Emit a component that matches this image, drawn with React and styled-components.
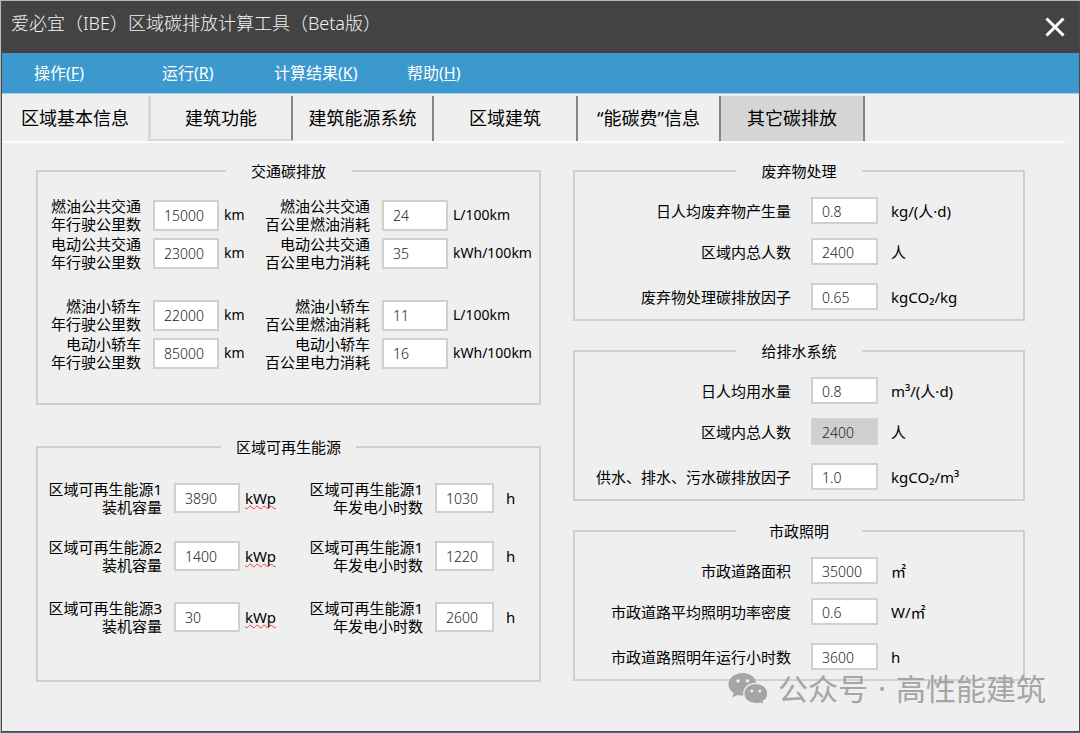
import React, { useState } from "react";
import styled, { createGlobalStyle } from "styled-components";

const GlobalStyle = createGlobalStyle`
  *, *::before, *::after { box-sizing: border-box; }
  body {
    margin: 0;
    background: #efefef;
    color: #000;
    font-family: "Noto Sans", "Noto Sans CJK SC", sans-serif;
    font-size: 15px;
  }
  button, input { font: inherit; color: inherit; }
`;

const Window = styled.div`
  position: relative;
  display: flex;
  min-height: 100vh;
  border-top: 1px solid #b4b8b8;
  border-left: 1px solid #b4b8b8;
  border-bottom: 1px solid #3a6ea5;
`;

const Frame = styled.div`
  flex: 1;
  display: flex;
  flex-direction: column;
  background: #efefef;
  border: 1px solid #4a4a4a;
  border-top: 0;
`;

const TitleBar = styled.header`
  display: flex;
  align-items: center;
  justify-content: space-between;
  height: 52px;
  padding: 0 14px 0 9px;
  background: #434343;
  color: #f2f2f2;
`;

const Title = styled.h1`
  margin: 0;
  padding-bottom: 8px;
  font-size: 18px;
  line-height: 24px;
  font-weight: 300;
`;

const CloseButton = styled.button`
  display: flex;
  padding: 0;
  border: 0;
  background: none;
  cursor: pointer;
`;

const MenuBar = styled.nav`
  display: flex;
  height: 41px;
  padding-left: 32px;
  background: #3c99cd;
  border-bottom: 1px solid #9fd0ea;
`;

const MenuItem = styled.button`
  width: ${(p) => p.$width}px;
  padding: 0 0 2px;
  border: 0;
  background: none;
  color: #fff;
  font-size: 16px;
  font-weight: 400;
  text-align: left;
  cursor: pointer;
`;

const TabList = styled.div`
  display: flex;
  height: 49px;
  margin-right: 14px;
  padding-top: 2px;
  border-bottom: 2px solid #fbfbfb;
`;

const Tab = styled.button`
  flex: 0 1 ${(p) => p.$width}px;
  padding: 0 0 ${(p) => (p.$raised ? 2 : 4)}px;
  border: 0;
  border-right: ${(p) => (p.$soft ? "3px solid #d8d8d8" : "2px solid #858585")};
  border-bottom: ${(p) => (p.$raised ? "2px solid #d8d8d8" : "0")};
  background: ${(p) => (p.$active ? "#d6d6d6" : "transparent")};
  color: #000;
  font-size: 18px;
  white-space: nowrap;
  cursor: pointer;
`;

const Content = styled.main`
  display: grid;
  grid-template-columns: 505fr 452fr;
  column-gap: 32px;
  padding: 17px 54px 20px 34px;
`;

const Column = styled.div`
  display: flex;
  flex-direction: column;
  gap: ${(p) => p.$gap}px;
  min-width: 0;
`;

const Panel = styled.fieldset`
  min-width: 0;
  margin: 0;
  padding: ${(p) => p.$padding};
  border: 2px solid #cfcfcf;
`;

const Legend = styled.legend`
  min-width: 126px;
  margin: 0 auto;
  padding: 0 15px;
  line-height: 22px;
  text-align: center;
`;

const Rows = styled.div`
  display: grid;
  grid-template-rows: ${(p) => p.$tracks};
  align-items: start;
`;

const Row = styled.div`
  display: grid;
  grid-template-columns: ${(p) => p.$columns};
  align-items: center;
  height: ${(p) => p.$height}px;
`;

const Label = styled.label`
  padding-right: ${(p) => p.$space || 12}px;
  line-height: 18px;
  text-align: right;
  white-space: nowrap;
`;

const Value = styled.input`
  width: 100%;
  height: ${(p) => p.$height}px;
  padding: 1px 0 0 9px;
  border: 2px solid #d0d0d0;
  border-radius: 0;
  outline: none;
  background: #fff;
  color: #222;
  font-size: 14px;
  font-weight: 300;

  &:disabled {
    background: #d0cece;
  }
`;

const Unit = styled.span`
  padding-left: ${(p) => p.$space}px;
  font-size: ${(p) => p.$size}px;
  line-height: 18px;
  white-space: nowrap;
`;

const Misspelt = styled.span`
  text-decoration: underline wavy #f04040 1px;
  text-underline-offset: 1px;
  text-decoration-skip-ink: none;
`;

const Watermark = styled.div`
  position: absolute;
  right: 34px;
  bottom: 26px;
  display: flex;
  align-items: center;
  gap: 10px;
  color: #a5a5a5;
  font-size: 30px;
  line-height: 32px;
  pointer-events: none;
`;

const menus = [
  { text: "操作", key: "F", width: 128 },
  { text: "运行", key: "R", width: 112 },
  { text: "计算结果", key: "K", width: 133 },
  { text: "帮助", key: "H", width: 90 },
];

const tabs = [
  { text: "区域基本信息", width: 149, soft: true },
  { text: "建筑功能", width: 142, raised: true },
  { text: "建筑能源系统", width: 141 },
  { text: "区域建筑", width: 144 },
  { text: "“能碳费”信息", width: 143 },
  { text: "其它碳排放", width: 144 },
];

const transport = [
  [["燃油公共交通", "年行驶公里数"], "15000", "km", ["燃油公共交通", "百公里燃油消耗"], "24", "L/100km"],
  [["电动公共交通", "年行驶公里数"], "23000", "km", ["电动公共交通", "百公里电力消耗"], "35", "kWh/100km"],
  [["燃油小轿车", "年行驶公里数"], "22000", "km", ["燃油小轿车", "百公里燃油消耗"], "11", "L/100km"],
  [["电动小轿车", "年行驶公里数"], "85000", "km", ["电动小轿车", "百公里电力消耗"], "16", "kWh/100km"],
];

const renewable = [
  [["区域可再生能源1", "装机容量"], "3890", "kWp", ["区域可再生能源1", "年发电小时数"], "1030", "h"],
  [["区域可再生能源2", "装机容量"], "1400", "kWp", ["区域可再生能源1", "年发电小时数"], "1220", "h"],
  [["区域可再生能源3", "装机容量"], "30", "kWp", ["区域可再生能源1", "年发电小时数"], "2600", "h"],
];

const singlePanels = [
  {
    id: "waste",
    title: "废弃物处理",
    rows: [
      ["日人均废弃物产生量", "0.8", "kg/(人·d)"],
      ["区域内总人数", "2400", "人"],
      ["废弃物处理碳排放因子", "0.65", "kgCO₂/kg"],
    ],
  },
  {
    id: "water",
    title: "给排水系统",
    rows: [
      ["日人均用水量", "0.8", "m³/(人·d)"],
      ["区域内总人数", "2400", "人", true],
      ["供水、排水、污水碳排放因子", "1.0", "kgCO₂/m³"],
    ],
  },
  {
    id: "lighting",
    title: "市政照明",
    rows: [
      ["市政道路面积", "35000", "㎡"],
      ["市政道路平均照明功率密度", "0.6", "W/㎡"],
      ["市政道路照明年运行小时数", "3600", "h"],
    ],
  },
];

function Field({ id, label, value, unit, height, labelSpace, unitSpace, unitSize = 15, disabled }) {
  const lines = Array.isArray(label) ? label : [label];
  return (
    <>
      <Label htmlFor={id} $space={labelSpace}>
        {lines.map((line, i) => (
          <React.Fragment key={line}>
            {i > 0 && <br />}
            {line}
          </React.Fragment>
        ))}
      </Label>
      <Value id={id} defaultValue={value} disabled={disabled} $height={height} />
      <Unit $space={unitSpace} $size={unitSize}>
        {unit === "kWp" ? <Misspelt>{unit}</Misspelt> : unit}
      </Unit>
    </>
  );
}

function PairPanel({ id, title, rows, columns, tracks, padding, inputHeight, unitSize, secondUnitSpace }) {
  const shared = { height: inputHeight, unitSize };
  return (
    <Panel $padding={padding}>
      <Legend>{title}</Legend>
      <Rows $tracks={tracks}>
        {rows.map(([labelA, valueA, unitA, labelB, valueB, unitB], i) => (
          <Row key={i} $columns={columns} $height={36}>
            <Field id={`${id}-${i}-a`} label={labelA} value={valueA} unit={unitA} unitSpace={5} {...shared} />
            <Field id={`${id}-${i}-b`} label={labelB} value={valueB} unit={unitB} unitSpace={secondUnitSpace} {...shared} />
          </Row>
        ))}
      </Rows>
    </Panel>
  );
}

function WeChatIcon() {
  return (
    <svg width="40" height="34" viewBox="0 0 40 34" aria-hidden="true">
      <path
        fill="#a5a5a5"
        d="M14.5 1C6.6 1 .5 6 .5 12.400c0 3.600 2 6.700 5.200 8.800L4.300 25.600l5.100-2.700c1.600.5 3.300.7 5.100.7 7.900 0 14-5 14-11.200S22.400 1 14.500 1z"
      />
      <circle cx="10" cy="9" r="1.800" fill="#efefef" />
      <circle cx="19.500" cy="9" r="1.800" fill="#efefef" />
      <path
        fill="#a5a5a5"
        stroke="#efefef"
        strokeWidth="1.300"
        d="M27.800 11.300c-6.700 0-12 4.400-12 10.100s5.300 10.200 12 10.200c1.500 0 2.900-.2 4.200-.6l4.400 2.300-1.200-3.900c2.800-1.800 4.600-4.700 4.600-8 0-5.700-5.300-10.100-12-10.100z"
      />
      <circle cx="23.800" cy="19" r="1.500" fill="#efefef" />
      <circle cx="31.800" cy="19" r="1.500" fill="#efefef" />
    </svg>
  );
}

export default function App() {
  const [active, setActive] = useState(5);
  return (
    <>
      <GlobalStyle />
      <Window>
        <Frame>
          <TitleBar>
            <Title>爱必宜（IBE）区域碳排放计算工具（Beta版）</Title>
            <CloseButton aria-label="关闭">
              <svg width="20" height="20" viewBox="0 0 20 20">
                <path d="M1.500 1.500L18.500 18.500M18.500 1.500L1.500 18.500" stroke="#fff" strokeWidth="3" />
              </svg>
            </CloseButton>
          </TitleBar>
          <MenuBar>
            {menus.map((m) => (
              <MenuItem key={m.key} $width={m.width}>
                {m.text}(<u>{m.key}</u>)
              </MenuItem>
            ))}
          </MenuBar>
          <TabList role="tablist">
            {tabs.map((t, i) => (
              <Tab
                key={t.text}
                role="tab"
                aria-selected={i === active}
                $active={i === active}
                $soft={t.soft}
                $raised={t.raised}
                $width={t.width}
                onClick={() => setActive(i)}
              >
                {t.text}
              </Tab>
            ))}
          </TabList>
          <Content>
            <Column $gap={31}>
              <PairPanel
                id="transport"
                title="交通碳排放"
                rows={transport}
                columns="115fr 66px 39fr 124fr 66px 91fr"
                tracks="38px 62px 38px 36px"
                padding="15px 0 32px"
                inputHeight={31}
                unitSize={14}
                secondUnitSpace={5}
              />
              <PairPanel
                id="renewable"
                title="区域可再生能源"
                rows={renewable}
                columns="136fr 66px 51fr 144fr 59px 45fr"
                tracks="58px 61px 36px"
                padding="22px 0 45px"
                inputHeight={30}
                unitSize={15}
                secondUnitSpace={12}
              />
            </Column>
            <Column $gap={19}>
              {singlePanels.map((panel) => (
                <Panel key={panel.id} $padding="15px 0 9px">
                  <Legend>{panel.title}</Legend>
                  <Rows $tracks="41px 45px 27px">
                    {panel.rows.map(([label, value, unit, disabled], i) => (
                      <Row key={label} $columns="236fr 67px 145fr" $height={27}>
                        <Field
                          id={`${panel.id}-${i}`}
                          label={label}
                          value={value}
                          unit={unit}
                          disabled={disabled}
                          height={27}
                          labelSpace={20}
                          unitSpace={13}
                        />
                      </Row>
                    ))}
                  </Rows>
                </Panel>
              ))}
            </Column>
          </Content>
        </Frame>
        <Watermark>
          <WeChatIcon />
          <span>公众号</span>
          <span>·</span>
          <span>高性能建筑</span>
        </Watermark>
      </Window>
    </>
  );
}
